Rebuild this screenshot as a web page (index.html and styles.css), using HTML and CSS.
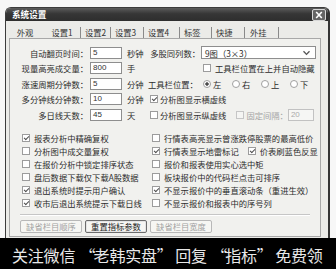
FILE: index.html
```html
<!DOCTYPE html>
<html lang="zh">
<head>
<meta charset="utf-8">
<title>系统设置</title>
<link rel="stylesheet" href="styles.css">
</head>
<body>
<div class="win">
  <div class="title">
    <span class="ttext">系统设置</span>
    <span class="close"><svg width="14" height="12" viewBox="0 0 14 12"><rect x="0.5" y="0.5" width="13" height="11" rx="1.5" fill="#666" stroke="#d8d8d8"/><path d="M4.2 3 L9.8 9 M9.8 3 L4.2 9" stroke="#fff" stroke-width="1.6"/></svg></span>
  </div>
  <div class="tabs">
    <span class="tab t0">外观</span>
    <span class="tab t1">设置1</span>
    <span class="tab ts w30">设置2</span>
    <span class="tab ts w33">设置3</span>
    <span class="tab ts w36">设置4</span>
    <span class="tab ts w32">标签</span>
    <span class="tab ts w33">快捷</span>
    <span class="tab ts w34">外挂</span>
    <span class="tab ts wend"></span>
  </div>
  <div class="panel">
    <div class="upper">
      <div class="row">
        <span class="lab">自动翻页时间：</span><span class="inp">5</span><span class="unit">秒钟</span>
        <span class="rlab">多股同列数：</span>
        <span class="select"><span>9图（3×3）</span><svg width="9" height="6" viewBox="0 0 9 6"><path d="M1.5 1.2 L4.5 4.4 L7.5 1.2" stroke="#555" stroke-width="1.3" fill="none"/></svg></span>
      </div>
      <div class="row">
        <span class="lab">现量高亮成交量：</span><span class="inp">800</span><span class="unit">手</span>
        <span class="cb ind2"></span><span class="ct">工具栏位置在上并自动隐藏</span>
      </div>
      <div class="row">
        <span class="lab">涨速周期分钟数：</span><span class="inp">5</span><span class="unit">分钟</span>
        <span class="rlab2">工具栏位置：</span>
        <span class="rg"><span class="rd on"></span><span class="rt">左</span></span>
        <span class="rg"><span class="rd"></span><span class="rt">右</span></span>
        <span class="rg"><span class="rd"></span><span class="rt">上</span></span>
        <span class="rg"><span class="rd"></span><span class="rt">下</span></span>
      </div>
      <div class="row">
        <span class="lab">多分钟线分钟数：</span><span class="inp">10</span><span class="unit">分钟</span>
        <span class="cb on ind4"></span><span class="ct3">分析图显示横虚线</span>
      </div>
      <div class="row">
        <span class="lab">多日线天数：</span><span class="inp">45</span><span class="unit">天</span>
        <span class="cb ind4"></span><span class="ct3">分析图显示纵虚线</span>
        <span class="cb dis ind5"></span><span class="ct dis">固定间隔：</span><span class="inp sm dis">20</span>
      </div>
    </div>
    <div class="lower">
      <div class="ci"><span class="cb on"></span><span class="ct4">报表分析中精确复权</span></div>
      <div class="ci"><span class="cb"></span><span class="ct4">行情表高亮显示曾涨跌停股票的最高低价</span></div>
      <div class="ci"><span class="cb"></span><span class="ct4">分析图中成交量复权</span></div>
      <div class="ci"><span class="cb on"></span><span class="ct4">行情表显示地雷标记</span><span class="cb on gap2"></span><span class="ct4">价表刷蓝色反显</span></div>
      <div class="ci"><span class="cb"></span><span class="ct4">在报价分析中锁定排序状态</span></div>
      <div class="ci"><span class="cb"></span><span class="ct4">报价和报表使用实心选中矩</span></div>
      <div class="ci"><span class="cb"></span><span class="ct4">盘后数据下载仅下载A股数据</span></div>
      <div class="ci"><span class="cb"></span><span class="ct4">板块报价中的代码栏点击可排序</span></div>
      <div class="ci"><span class="cb on"></span><span class="ct4">退出系统时提示用户确认</span></div>
      <div class="ci"><span class="cb on"></span><span class="ct4">不显示报价中的垂直滚动条（重进生效）</span></div>
      <div class="ci"><span class="cb on"></span><span class="ct4">收市后退出系统提示下载日线</span></div>
      <div class="ci"><span class="cb"></span><span class="ct4">不显示报价和报表中的序号列</span></div>
    </div>
    <div class="sep"></div>
    <div class="btns">
      <span class="btn dis">缺省栏目顺序</span>
      <span class="btn act">重置指标参数</span>
      <span class="btn dis">缺省栏目宽度</span>
    </div>
  </div>
</div>
<div class="banner">关注微信 <span class="q">“</span>老韩实盘<span class="q">”</span> 回复 <span class="q">“</span>指标<span class="q">”</span> 免费领</div>
</body>
</html>
```
FILE: styles.css
```css
* { box-sizing: border-box; }
html, body { margin: 0; padding: 0; }
body {
  width: 336px;
  height: 269px;
  overflow: hidden;
  background: #f7f7f7;
  padding-top: 7px;
  font-family: "Noto Sans CJK SC", "Noto Sans", sans-serif;
  font-size: 8.3px;
  color: #2c2c2c;
}
.win {
  margin-left: 5px;
  width: 325px;
  height: 231px;
  border: 1px solid #3c3c3c;
  border-right: 2px solid #353535;
  border-bottom: none;
  border-radius: 6px 6px 0 0;
  background: #ebebe8;
  overflow: hidden;
}
.title {
  height: 13px;
  background: linear-gradient(#5c5c5c, #363636 45%, #2e2e2e);
  display: flex;
  align-items: center;
  justify-content: space-between;
  padding-left: 6px;
  padding-right: 2px;
}
.ttext { color: #fff; font-weight: bold; font-size: 8.6px; line-height: 13px; }
.close { display: flex; height: 12px; }
.close svg { display: block; }

.tabs {
  height: 17px;
  display: flex;
  align-items: flex-end;
}
.tab { height: 11px; line-height: 10px; white-space: nowrap; color: #333; }
.t0 { width: 38px; text-align: center; }
.t1 { width: 36px; text-align: center; }
.ts { border-left: 1px solid #8a8a8a; padding-left: 4px; }
.w30 { width: 30px; }
.w33 { width: 33px; }
.w36 { width: 36px; }
.w32 { width: 32px; }
.w34 { width: 34px; padding-left: 5px; }
.wend { width: 1px; padding: 0; }

.panel {
  margin-left: 3px;
  width: 312px;
  height: 199px;
  border: 1px solid #a8a8a8;
  background: #f1f1ee;
  padding-top: 6px;
  padding-left: 0;
}
.row {
  display: flex;
  align-items: center;
  height: 15.5px;
  white-space: nowrap;
}
.lab { width: 78px; text-align: right; }
.inp {
  width: 32px;
  height: 12px;
  margin-left: 2px;
  background: #fff;
  border: 1px solid #8e8e8e;
  font-family: "Liberation Sans", sans-serif;
  font-size: 8px;
  line-height: 10px;
  padding-left: 2px;
  color: #333;
}
.inp.sm { width: 26px; margin-left: 0; }
.inp.dis { border-color: #c2c2c2; color: #aaa; background: #f6f6f4; }
.unit { width: 26px; padding-left: 5px; }
.rlab { width: 52px; text-align: right; }
.rlab2 { width: 55px; }
.select {
  width: 115px;
  height: 13px;
  margin-left: 1px;
  background: #fff;
  border: 1px solid #8e8e8e;
  display: flex;
  align-items: center;
  justify-content: space-between;
  padding-left: 3px;
  padding-right: 4px;
}
.select svg { display: block; }

.cb {
  position: relative;
  flex: none;
  width: 8px;
  height: 8px;
  border: 1px solid #9c9c9c;
  background: #fff;
}
.cb.on::after {
  content: "";
  position: absolute;
  left: 2px;
  top: 0;
  width: 2px;
  height: 4px;
  border: solid #505050;
  border-width: 0 1.2px 1.2px 0;
  transform: rotate(45deg);
}
.cb.dis { border-color: #c6c6c6; background: #f5f5f3; }
.ind2 { margin-left: 55px; }
.ind4 { margin-left: 2px; }
.ind5 { margin-left: 10px; }
.ct { margin-left: 4px; }
.ct.dis { color: #a4a4a4; margin-left: 2px; }
.ct3 { margin-left: 2px; }
.ct4 { margin-left: 4px; }
.gap2 { margin-left: 9px; }

.rg { width: 29px; display: flex; align-items: center; }
.rd {
  width: 8px;
  height: 8px;
  border-radius: 50%;
  border: 1px solid #a0a0a0;
  background: #fff;
}
.rd.on { background: radial-gradient(circle, #4a4a4a 0 1.4px, #fff 2px); }
.rt { margin-left: 2px; }

.lower {
  margin-top: 9px;
  padding-left: 12px;
  display: grid;
  grid-template-columns: 130px 1fr;
  grid-auto-rows: 13px;
  white-space: nowrap;
}
.ci { display: flex; align-items: center; }

.sep {
  margin: 4px 10px 0 10px;
  height: 2px;
  border-top: 1px solid #c6c6c6;
  border-bottom: 1px solid #fff;
}
.btns {
  margin-top: 4px;
  padding-left: 10px;
  display: flex;
  gap: 3px;
}
.btn {
  width: 62px;
  height: 13px;
  line-height: 11px;
  text-align: center;
  border: 1px solid #b8b8b8;
  border-radius: 2px;
  background: #f6f6f3;
}
.btn.dis { color: #a2a2a2; }
.btn.act { color: #222; border-color: #6c6c6c; box-shadow: inset 0 0 0 1px #e4e4e4; }

.banner {
  height: 31px;
  background: #000;
  color: #e8e8e8;
  font-size: 16px;
  line-height: 31px;
  padding-left: 12px;
  padding-top: 2px;
  white-space: nowrap;
  word-spacing: 1px;
  letter-spacing: -0.2px;
}
.q { letter-spacing: -2px; }
```
